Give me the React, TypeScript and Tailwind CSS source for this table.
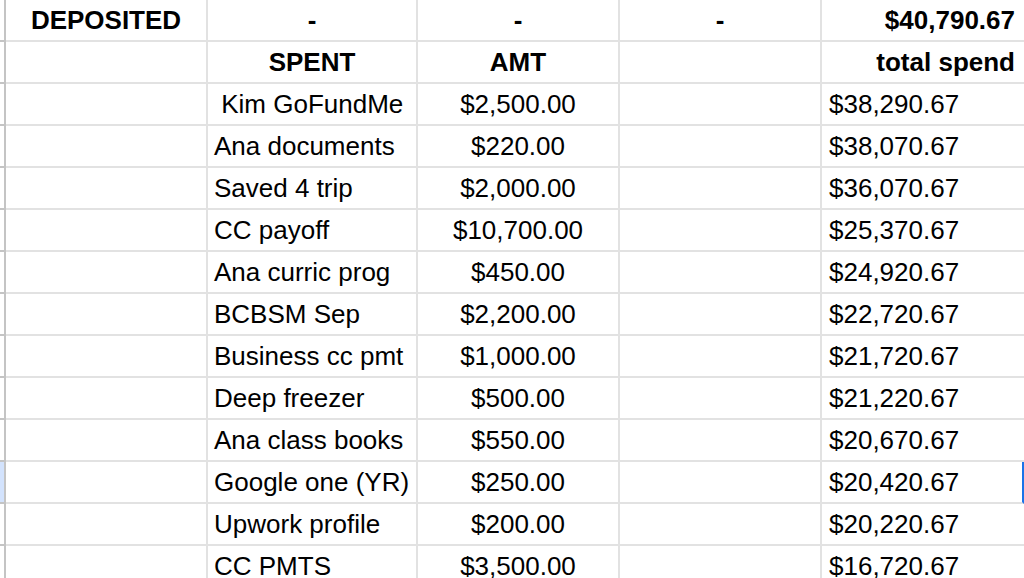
import React from "react";

type Row = { a?: string; b?: string; c?: string; d?: string; e?: string; bold?: boolean; eRight?: boolean; selected?: boolean };

const rows: Row[] = [
  { a: "DEPOSITED", b: "-", c: "-", d: "-", e: "$40,790.67", bold: true, eRight: true },
  { b: "SPENT", c: "AMT", e: "total spend", bold: true, eRight: true },
  { b: "\u00a0Kim GoFundMe", c: "$2,500.00", e: "$38,290.67" },
  { b: "Ana documents", c: "$220.00", e: "$38,070.67" },
  { b: "Saved 4 trip", c: "$2,000.00", e: "$36,070.67" },
  { b: "CC payoff", c: "$10,700.00", e: "$25,370.67" },
  { b: "Ana curric prog", c: "$450.00", e: "$24,920.67" },
  { b: "BCBSM Sep", c: "$2,200.00", e: "$22,720.67" },
  { b: "Business cc pmt", c: "$1,000.00", e: "$21,720.67" },
  { b: "Deep freezer", c: "$500.00", e: "$21,220.67" },
  { b: "Ana class books", c: "$550.00", e: "$20,670.67" },
  { b: "Google one (YR)", c: "$250.00", e: "$20,420.67", selected: true },
  { b: "Upwork profile", c: "$200.00", e: "$20,220.67" },
  { b: "CC PMTS", c: "$3,500.00", e: "$16,720.67" },
];

export default function App() {
  return (
    <div
      className="w-[1024px] h-[578px] overflow-hidden bg-white text-black text-[26px]"
      style={{ fontFamily: '"Liberation Sans", Arial, sans-serif' }}
    >
      {rows.map((r, i) => (
        <div key={i} className="flex h-[42px] leading-[30px]">
          <div
            className={`w-[6px] shrink-0 border-r-2 border-b-2 border-r-[#c4c4c4] border-b-[#c4c4c4] ${r.selected ? "bg-[#d3e3fd]" : "bg-white"}`}
          />
          <div className={`w-[202px] shrink-0 flex items-center justify-center border-r-2 border-b-2 border-[#e2e2e2] ${r.bold ? "font-bold" : ""}`}>
            {r.a}
          </div>
          <div className={`w-[210px] shrink-0 flex items-center border-r-2 border-b-2 border-[#e2e2e2] whitespace-pre ${r.bold ? "font-bold justify-center" : "pl-[6px]"}`}>
            {r.b}
          </div>
          <div className={`w-[202px] shrink-0 flex items-center justify-center border-r-2 border-b-2 border-[#e2e2e2] ${r.bold ? "font-bold" : ""}`}>
            {r.c}
          </div>
          <div className={`w-[202px] shrink-0 flex items-center justify-center border-r-2 border-b-2 border-[#e2e2e2] ${r.bold ? "font-bold" : ""}`}>
            {r.d}
          </div>
          <div
            className={`flex-1 flex items-center border-b-2 border-[#e2e2e2] ${r.eRight ? "justify-end pr-[9px]" : "pl-[7px]"} ${r.bold ? "font-bold" : ""} ${r.selected ? "border-r-2 border-r-[#1a73e8]" : ""}`}
          >
            {r.e}
          </div>
        </div>
      ))}
    </div>
  );
}
